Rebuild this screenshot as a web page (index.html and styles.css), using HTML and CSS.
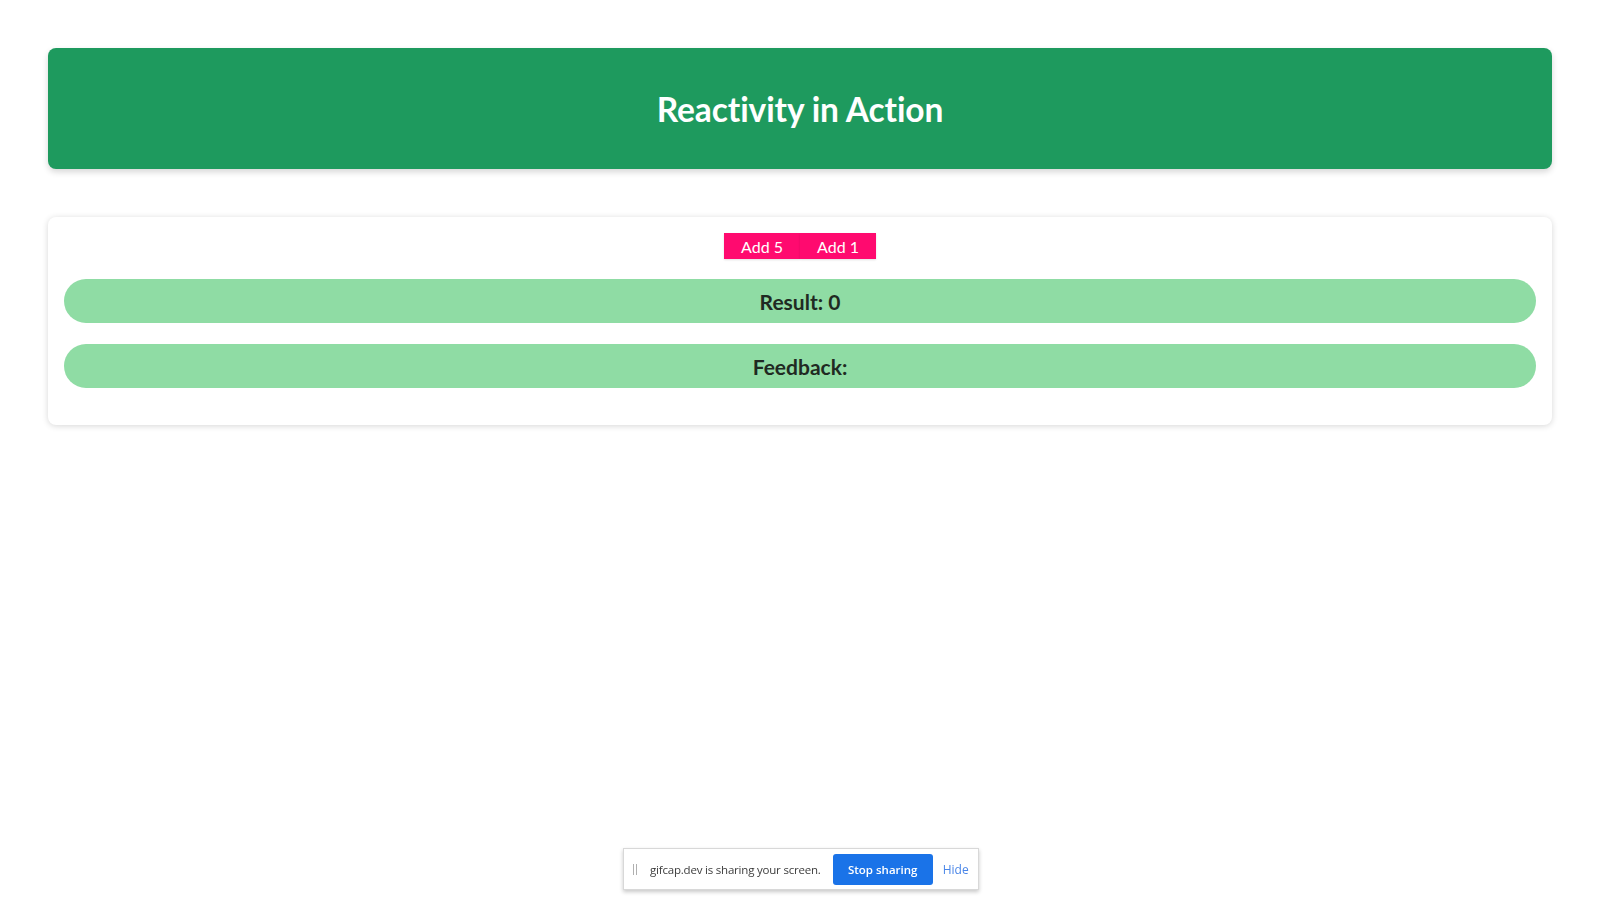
FILE: index.html
```html
<!DOCTYPE html>
<html lang="en">
<head>
<meta charset="utf-8">
<title>Reactivity in Action</title>
<link rel="stylesheet" href="styles.css">
</head>
<body>
<main class="page">
  <header class="hero">
    <h1 class="hero-title">Reactivity in Action</h1>
  </header>
  <section class="card">
    <div class="actions">
      <button class="btn">Add 5</button>
      <button class="btn">Add 1</button>
    </div>
    <div class="pill">Result: 0</div>
    <div class="pill">Feedback:</div>
  </section>
</main>
<div class="share-bar">
  <span class="grip"></span>
  <span class="share-text">gifcap.dev is sharing your screen.</span>
  <button class="stop-btn">Stop sharing</button>
  <span class="hide-link">Hide</span>
</div>
</body>
</html>
```
FILE: styles.css
```css
* { box-sizing: border-box; }
html, body { margin: 0; padding: 0; background: #ffffff; }
body {
  font-family: "Lato", "Open Sans", sans-serif;
  color: #1f2a22;
}
.page {
  padding: 48px;
  display: flex;
  flex-direction: column;
  gap: 48px;
}
.hero {
  height: 121px;
  background: #1e9a5e;
  border-radius: 8px;
  box-shadow: 0 3px 6px rgba(0,0,0,0.16);
  display: flex;
  align-items: center;
  justify-content: center;
}
.hero-title {
  margin: 0;
  color: #ffffff;
  font-size: 33.5px;
  font-weight: 700;
  letter-spacing: -0.1px;
}
.card {
  background: #ffffff;
  border-radius: 8px;
  box-shadow: 0 1px 6px rgba(0,0,0,0.16);
  padding: 16px 16px 37px;
  display: flex;
  flex-direction: column;
}
.actions {
  display: flex;
  justify-content: center;
}
.btn {
  background: #ff0a6f;
  color: #ffffff;
  border: none;
  height: 26px;
  width: 76px;
  padding: 0;
  font-family: "Lato", "Open Sans", sans-serif;
  font-size: 16px;
  cursor: pointer;
  box-shadow: 0 1px 2px rgba(0,0,0,0.12);
}
.pill {
  margin-top: 20px;
  height: 44px;
  border-radius: 22px;
  background: #8fdca4;
  display: flex;
  align-items: center;
  justify-content: center;
  font-size: 21px;
  font-weight: 700;
  color: #1f2a22;
}
.pill + .pill { margin-top: 21px; }
.share-bar {
  position: fixed;
  left: 623px;
  top: 848px;
  width: 356px;
  height: 42px;
  background: #ffffff;
  border: 1px solid #d8d8d8;
  box-shadow: 0 2px 4px rgba(0,0,0,0.22);
  display: flex;
  align-items: center;
  padding: 0 0 0 9px;
  font-family: "Open Sans", "Noto Sans", sans-serif;
  font-size: 11.5px;
  color: #3c3c3c;
}
.grip {
  width: 4px;
  height: 11px;
  border-left: 1px solid #b0b0b0;
  border-right: 1px solid #b0b0b0;
  margin-right: 13px;
}
.share-text { white-space: nowrap; letter-spacing: -0.2px; }
.stop-btn {
  margin-left: 12px;
  width: 100px;
  height: 31px;
  background: #1a73e8;
  color: #ffffff;
  border: none;
  border-radius: 3px;
  font-family: "Open Sans", "Noto Sans", sans-serif;
  font-size: 11.5px;
  font-weight: 600;
  padding: 0;
}
.hide-link {
  margin-left: 10px;
  color: #4a86e8;
  font-size: 12px;
}
```
